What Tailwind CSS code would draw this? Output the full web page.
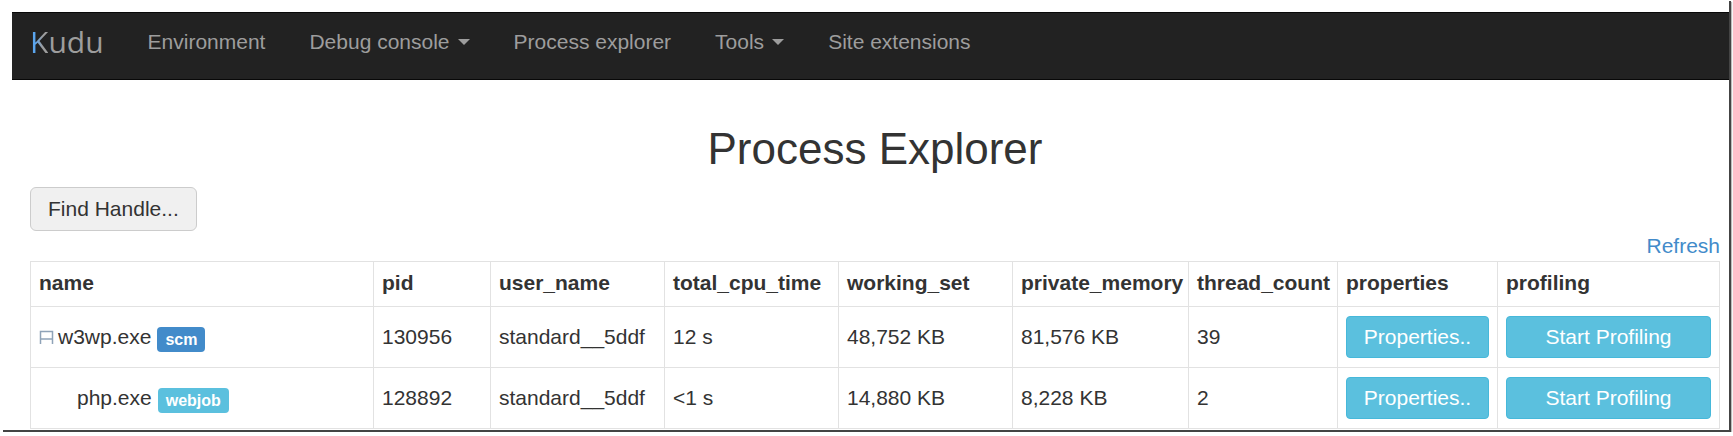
<!DOCTYPE html>
<html lang="en">
<head>
  <meta charset="UTF-8">
  <meta name="viewport" content="width=device-width, initial-scale=1">
  <title>Process Explorer</title>
  <script src="https://cdn.jsdelivr.net/npm/@tailwindcss/browser@4"></script>
</head>
<body class="bg-white font-['Liberation_Sans',Arial,sans-serif] text-[21px] leading-[30px] text-[#333]">
  <div class="ml-[3px] mt-px mr-[2px] border-r-2 border-b-2 border-[#444] pt-[11px] pb-px shadow-[1px_1px_1px_#bbb]">

    <!-- Navbar -->
    <nav class="ml-[9px] flex h-[68px] items-start border-y border-[#080808] bg-[#222] pt-[14px] text-[#9d9d9d]">
      <a href="#" class="pr-[22px] pl-[18px] font-['Open_Sans',sans-serif] text-[30px]"><span class="bg-linear-to-r from-[#5aa5ee] from-30% to-[#9d9d9d] to-70% bg-clip-text text-transparent">K</span>udu</a>
      <a href="#" class="px-[22px]">Environment</a>
      <a href="#" class="flex items-center gap-2 px-[22px]">Debug console
        <svg class="h-[6px] w-[12px]" viewBox="0 0 12 6" fill="currentColor"><path d="M0 0h12L6 6z"/></svg>
      </a>
      <a href="#" class="px-[22px]">Process explorer</a>
      <a href="#" class="flex items-center gap-2 px-[22px]">Tools
        <svg class="h-[6px] w-[12px]" viewBox="0 0 12 6" fill="currentColor"><path d="M0 0h12L6 6z"/></svg>
      </a>
      <a href="#" class="px-[22px]">Site extensions</a>
    </nav>

    <main class="pt-[45px] pr-[9px] pl-[27px]">
      <h1 class="text-center text-[44px] leading-[48px]">Process Explorer</h1>
      <button type="button" class="mt-[14px] block h-[44px] rounded-md border border-[#ccc] bg-[#f0f0f0] px-[17px]">Find Handle...</button>
      <div class="text-right"><a href="#" class="text-[#428bca]">Refresh</a></div>

      <table class="w-full table-fixed border-collapse text-left [&_td]:border [&_td]:border-[#e2e2e2] [&_td]:px-2 [&_th]:border [&_th]:border-[#e2e2e2] [&_th]:px-2 [&_th]:pb-0.5">
        <colgroup>
          <col class="w-[343px]">
          <col class="w-[117px]">
          <col class="w-[174px]">
          <col class="w-[174px]">
          <col class="w-[174px]">
          <col class="w-[176px]">
          <col class="w-[149px]">
          <col class="w-[160px]">
          <col class="w-[222px]">
        </colgroup>
        <thead>
          <tr class="h-[45px]">
            <th>name</th>
            <th>pid</th>
            <th>user_name</th>
            <th>total_cpu_time</th>
            <th>working_set</th>
            <th>private_memory</th>
            <th>thread_count</th>
            <th>properties</th>
            <th>profiling</th>
          </tr>
        </thead>
        <tbody>
          <tr class="h-[61px]">
            <td>
              <div class="flex items-center">
                <svg class="mr-1 h-[14px] w-[15px]" viewBox="0 0 15 14" fill="none" stroke="#8fa3b8" stroke-width="1.5"><path d="M1.5 14V1.5h12V14M1.5 9h12"/></svg>
                w3wp.exe
                <span class="mt-1 ml-[6px] rounded-sm bg-[#428bca] px-2 text-base leading-[25px] font-bold text-white">scm</span>
              </div>
            </td>
            <td>130956</td>
            <td>standard__5ddf</td>
            <td>12 s</td>
            <td>48,752 KB</td>
            <td>81,576 KB</td>
            <td>39</td>
            <td><button type="button" class="h-[42px] w-full rounded-sm border border-[#46b8da] bg-[#5bc0de] text-white">Properties..</button></td>
            <td><button type="button" class="h-[42px] w-full rounded-sm border border-[#46b8da] bg-[#5bc0de] text-white">Start Profiling</button></td>
          </tr>
          <tr class="h-[61px]">
            <td>
              <div class="flex items-center pl-[38px]">
                php.exe
                <span class="mt-1 ml-[6px] rounded-sm bg-[#5bc0de] px-2 text-base leading-[25px] font-bold text-white">webjob</span>
              </div>
            </td>
            <td>128892</td>
            <td>standard__5ddf</td>
            <td>&lt;1 s</td>
            <td>14,880 KB</td>
            <td>8,228 KB</td>
            <td>2</td>
            <td><button type="button" class="h-[42px] w-full rounded-sm border border-[#46b8da] bg-[#5bc0de] text-white">Properties..</button></td>
            <td><button type="button" class="h-[42px] w-full rounded-sm border border-[#46b8da] bg-[#5bc0de] text-white">Start Profiling</button></td>
          </tr>
        </tbody>
      </table>
    </main>
  </div>
</body>
</html>
